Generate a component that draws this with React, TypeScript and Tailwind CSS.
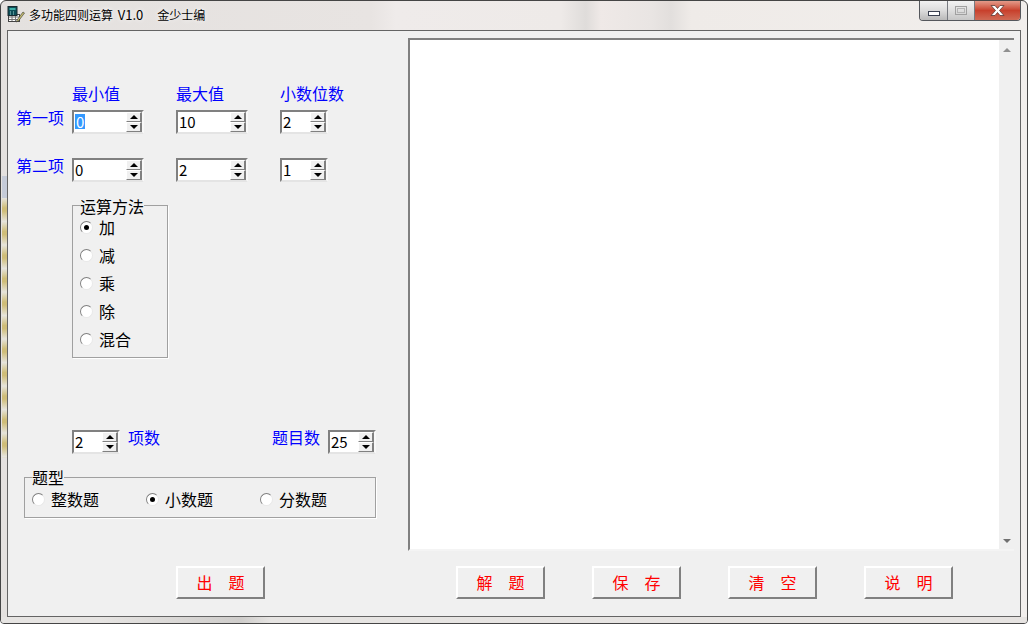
import React from 'react';

const cjk = { fontFamily: '"Noto Sans CJK SC", "Liberation Sans", sans-serif' };

function Spin({ value, wide = false, selected = false }: { value: string; wide?: boolean; selected?: boolean }) {
  return (
    <div className={`flex h-6 ${wide ? 'w-[72px]' : 'w-12'} border-2 border-t-[#808080] border-l-[#808080] border-r-[#f8f8f8] border-b-[#e4e4e4] bg-white`}>
      <div className="flex flex-1 items-center pb-[2px] pl-[1px] text-[15px] leading-none text-black">
        {selected ? <span className="bg-[#3399ff] px-px text-white">{value}</span> : value}
      </div>
      <div className="flex w-[16px] flex-col">
        <div className="flex h-[10px] items-center justify-center border border-r-2 border-t-white border-l-white border-r-[#808080] border-b-[#808080] bg-[#f0f0f0]">
          <div className="h-0 w-0 border-x-[4px] border-b-[4px] border-x-transparent border-b-black" />
        </div>
        <div className="flex h-[10px] items-center justify-center border border-r-2 border-t-white border-l-white border-r-[#808080] border-b-[#808080] bg-[#f0f0f0]">
          <div className="h-0 w-0 border-x-[4px] border-t-[4px] border-x-transparent border-t-black" />
        </div>
      </div>
    </div>
  );
}

function Radio({ label, checked = false }: { label: string; checked?: boolean }) {
  return (
    <div className="flex h-5 items-center gap-[6px]">
      <div className="flex h-[13px] w-[13px] items-center justify-center rounded-full border border-t-[#808080] border-l-[#808080] border-r-[#e8e8e8] border-b-[#e8e8e8] bg-white">
        {checked && <div className="h-[5px] w-[5px] rounded-full bg-black" />}
      </div>
      <span className="text-[16px] leading-5 text-black">{label}</span>
    </div>
  );
}

function Blue({ children, className = '' }: { children: React.ReactNode; className?: string }) {
  return <div className={`text-[16px] leading-5 text-[#0000ff] ${className}`}>{children}</div>;
}

function Btn({ label }: { label: string }) {
  return (
    <div className="flex h-[33px] w-[89px] items-center justify-center gap-4 border-2 border-t-white border-l-white border-r-[#808080] border-b-[#808080] bg-[#f0f0f0] pb-[2px] text-[16px] text-[#ff0000]">
      <span>{label[0]}</span>
      <span>{label[1]}</span>
    </div>
  );
}

export default function App() {
  return (
    <div
      className="relative flex h-[624px] w-[1028px] flex-col overflow-hidden rounded-t-[6px] rounded-b-[4px] border border-[#454545] bg-[linear-gradient(90deg,#e4e1df_0px,#e8e4e2_370px,#efebea_395px,#eeeae8_560px,#dfdcda_585px,#efe9e7_600px,#e9e5e3_650px,#e2dfdd_670px,#efebe8_690px,#f1eeec_1028px)]"
      style={cjk}
    >
      {/* desktop showing through the glass frame */}
      <div className="absolute left-[1px] top-[175px] h-[22px] w-[5px] bg-[#c5cbd8]" />
      <div className="absolute left-[1px] top-[197px] h-[260px] w-[5px] bg-[repeating-linear-gradient(180deg,#e6e4dc_0px,#cfbd78_10px,#cfbd78_13px,#e6e4dc_23.5px)]" />

      {/* title bar */}
      <div className="flex h-[29px] shrink-0 items-start justify-between pl-[6px] pr-[6px]">
        <div className="flex items-center pt-[5px]">
          <svg width="18" height="17" viewBox="0 0 18 17">
            <rect x="1.5" y="8.5" width="11" height="7" fill="#ffffff" stroke="#444444" />
            <path d="M2 11h10M2 13.5h10M5 9v6M8.5 9v6" stroke="#777777" />
            <rect x="1" y="0.5" width="9" height="9" fill="#0d4f58" stroke="#1a2a30" />
            <rect x="2.5" y="2" width="6" height="2" fill="#3fb0a8" />
            <path d="M3 6h1M6 6h1M3 8h1M6 8h1" stroke="#9fd4d0" />
            <path d="M10 14l6-8 1.500 1-6 8-2 1z" fill="#c8c070" stroke="#333333" strokeWidth="0.6" />
          </svg>
          <span className="ml-[4px] whitespace-nowrap text-[12px] leading-4 text-black [text-shadow:0_0_5px_#ffffff]">
            多功能四则运算 <span className="ml-[2px] text-[13px]">V1.0</span>
          </span>
          <span className="ml-[14px] whitespace-nowrap text-[12px] leading-4 text-black [text-shadow:0_0_5px_#ffffff]">金少士编</span>
        </div>
        <div className="flex h-[20px] w-[102px] overflow-hidden rounded-b-[4px] border border-t-0 border-[#55575c]">
          <div className="flex w-[28px] items-center justify-center border-r border-[#777a80] bg-gradient-to-b from-[#f2f2f2] via-[#dcdcdc] to-[#b9b9b9]">
            <div className="mt-[5px] h-[5px] w-[12px] border border-[#3a4050] bg-white" />
          </div>
          <div className="flex w-[27px] items-center justify-center border-r border-[#777a80] bg-gradient-to-b from-[#f2f2f2] via-[#dedede] to-[#c6c6c6]">
            <div className="h-[9px] w-[12px] border border-[#a0a0a0] p-[1px]">
              <div className="h-full border border-[#b4b4b4]" />
            </div>
          </div>
          <div className="flex flex-1 items-center justify-center bg-gradient-to-b from-[#e39a8a] via-[#c8402c] to-[#cf6a55]">
            <svg width="15" height="11" viewBox="0 0 15 11">
              <path d="M1 0.500h4l2.500 3 2.500-3h4l-4.500 5 4.500 5h-4l-2.500-3-2.500 3h-4l4.500-5z" fill="#ffffff" stroke="#5a3a36" strokeWidth="0.8" />
            </svg>
          </div>
        </div>
      </div>

      {/* client area */}
      <div className="mx-[6px] flex flex-1 flex-col border border-[#646464] bg-[#f0f0f0]">
        <div className="flex flex-1">
          {/* left pane */}
          <div className="flex w-[400px] flex-col pl-[8px] pt-[52px]">
            <div className="flex pl-[56px]">
              <Blue className="w-[104px]">最小值</Blue>
              <Blue className="w-[104px]">最大值</Blue>
              <Blue>小数位数</Blue>
            </div>
            <div className="mt-[7px] flex items-start">
              <Blue className="-mt-[3px] w-[56px]">第一项</Blue>
              <div className="w-[104px]"><Spin value="0" wide selected /></div>
              <div className="w-[104px]"><Spin value="10" wide /></div>
              <Spin value="2" />
            </div>
            <div className="mt-[24px] flex items-start">
              <Blue className="-mt-[3px] w-[56px]">第二项</Blue>
              <div className="w-[104px]"><Spin value="0" wide /></div>
              <div className="w-[104px]"><Spin value="2" wide /></div>
              <Spin value="1" />
            </div>

            <div className="relative ml-[56px] mt-[23px] flex h-[153px] w-[96px] flex-col gap-2 border border-[#a0a0a0] pl-[7px] pt-[11px] shadow-[1px_1px_0_#ffffff]">
              <span className="absolute -top-[8px] bg-[#f0f0f0] text-[16px] leading-4 text-black">运算方法</span>
              <Radio label="加" checked />
              <Radio label="减" />
              <Radio label="乘" />
              <Radio label="除" />
              <Radio label="混合" />
            </div>

            <div className="mt-[72px] flex w-[360px] items-start pl-[56px]">
              <Spin value="2" />
              <Blue className="-mt-[3px] ml-2">项数</Blue>
              <Blue className="-mt-[3px] ml-auto mr-2">题目数</Blue>
              <Spin value="25" />
            </div>

            <div className="relative ml-[8px] mt-[23px] flex h-[41px] w-[352px] items-center border border-[#a0a0a0] pl-[7px] pt-[3px] shadow-[1px_1px_0_#ffffff]">
              <span className="absolute left-[7px] -top-[9px] bg-[#f0f0f0] text-[16px] leading-4 text-black">题型</span>
              <div className="w-[114px]"><Radio label="整数题" /></div>
              <div className="w-[114px]"><Radio label="小数题" checked /></div>
              <Radio label="分数题" />
            </div>
          </div>

          {/* output box */}
          <div className="mt-[7px] flex h-[513px] w-[606px] border-2 border-r-0 border-t-[#808080] border-l-[#808080] border-b-[#f4f4f4] bg-white">
            <div className="flex-1" />
            <div className="flex w-[15px] flex-col items-center justify-between bg-[#f0f0f0] pb-[6px] pt-[8px]">
              <div className="h-0 w-0 border-x-[4px] border-b-[4px] border-x-transparent border-b-[#909090]" />
              <div className="h-0 w-0 border-x-[4px] border-t-[4px] border-x-transparent border-t-[#707070]" />
            </div>
          </div>
        </div>

        {/* buttons */}
        <div className="mb-[17px] flex pl-[168px]">
          <Btn label="出题" />
          <div className="ml-[191px] flex gap-[47px]">
            <Btn label="解题" />
            <Btn label="保存" />
            <Btn label="清空" />
            <Btn label="说明" />
          </div>
        </div>
      </div>

      {/* bottom frame */}
      <div className="h-[6px] shrink-0 bg-[linear-gradient(90deg,#e6e4e2_100px,#cfcdcb_240px,#e6e4e2_270px,#e6e3e1_1028px)]" />
    </div>
  );
}
